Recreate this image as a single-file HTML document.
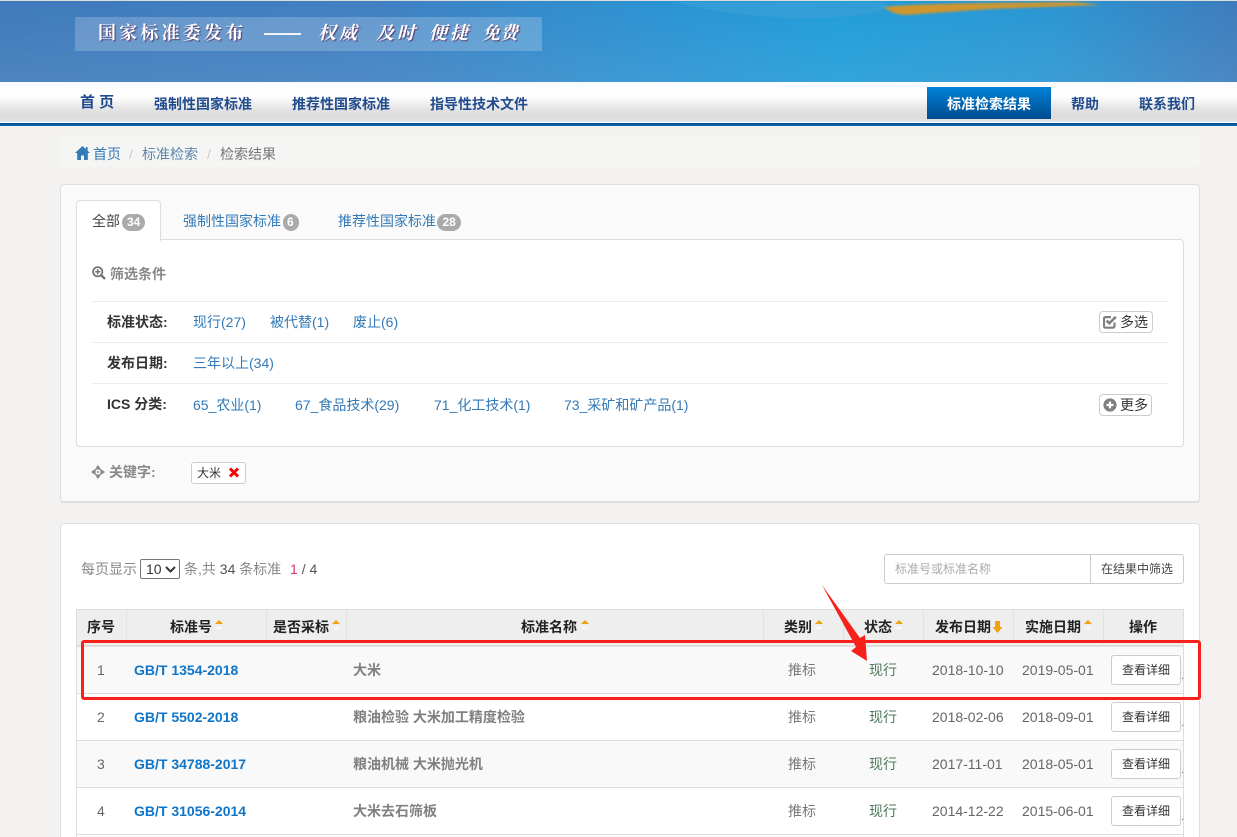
<!DOCTYPE html>
<html lang="zh-CN">
<head>
<meta charset="utf-8">
<title>检索结果</title>
<style>
html,body{margin:0;padding:0;width:1237px;height:837px;overflow:hidden;background:#f3f2f1}
body{position:relative;font-family:"Liberation Sans","Noto Sans CJK SC",sans-serif;font-size:14px;color:#666}
.a{position:absolute;box-sizing:border-box}
.t{position:absolute;white-space:nowrap;line-height:20px}
a{color:#337ab7;text-decoration:none}
.nav{font-weight:bold;color:#1f4b8e;margin-top:1px}
.lk{color:#337ab7}
.lb{font-weight:bold;color:#333}
.badge{display:inline-block;background:#aaa;color:#fff;font-size:12px;font-weight:bold;border-radius:9px;line-height:17px;padding:0 5px;text-align:center;vertical-align:0;margin-left:2px}
.hl{position:absolute;height:1px;background:#eee;left:92px;width:1076px}
.th{position:absolute;top:617px;white-space:nowrap;line-height:20px;font-weight:bold;color:#222;text-align:center}
.vl{position:absolute;top:610px;height:35px;width:1px;background:#e2e2e2}
.row{position:absolute;left:77px;width:1106px;height:46px;border-bottom:1px solid #ddd;box-sizing:content-box}
.btn{position:absolute;left:1111px;width:70px;height:30px;border:1px solid #ccc;border-radius:3px;background:#fff;box-sizing:border-box;text-align:center;line-height:28px;font-size:12px;color:#333}
.dot{position:absolute;left:1181px;font-size:11px;color:#777;line-height:12px}
.gb{font-weight:bold;color:#0e75c9}
.nm{font-weight:bold;color:#808080}
.bn{position:absolute;white-space:nowrap;top:21px;line-height:22px;font-size:18px;color:#fff;font-family:'Noto Serif CJK SC',serif;text-shadow:1px 1px 1px #5a3a6a}
.bi{font-weight:bold;font-style:italic;letter-spacing:3px}
</style>
</head>
<body>

<!-- banner -->
<div class="a" style="left:0;top:0;width:1237px;height:82px;background:linear-gradient(90deg,#3f7abb 0%,#4080c2 30%,#2a94d3 55%,#219dd8 68%,#2a96d2 85%,#3d7cbd 100%);border-top:1px solid #ddd"></div>
<div class="a" style="left:0;top:1px;width:1237px;height:81px;background:linear-gradient(180deg,rgba(255,255,255,0) 0%,rgba(255,255,255,.08) 100%)"></div>
<svg class="a" style="left:0;top:0" width="1237" height="82" viewBox="0 0 1237 82">
  <defs><filter id="b" x="-5%" y="-50%" width="110%" height="200%"><feGaussianBlur stdDeviation="1"/></filter></defs>
  <path d="M675 2C720 14 790 22 850 16C870 14 880 11 886 8L885 2Z" fill="#3a9fd6" opacity=".75"/>
  <path d="M884 7C920 3 1010 3 1075 2L1100 5L990 9L905 15C895 14 888 11 884 7Z" fill="#cf952f" filter="url(#b)"/>
</svg>
<div class="a" style="left:75px;top:17px;width:467px;height:34px;background:rgba(255,255,255,.2)"></div>
<div class="bn" style="left:98px;letter-spacing:3.2px;font-weight:bold">国家标准委发布</div>
<div class="a" style="left:264px;top:33px;width:37px;height:2px;background:#f2f4f8"></div>
<div class="bn bi" style="left:318px">权威</div>
<div class="bn bi" style="left:376px">及时</div>
<div class="bn bi" style="left:429px">便捷</div>
<div class="bn bi" style="left:482px;letter-spacing:0">免费</div>

<!-- nav -->
<div class="a" style="left:0;top:82px;width:1237px;height:40px;background:linear-gradient(180deg,#f8fafd 0%,#fff 25%,#fff 35%,#e2e2e2 70%,#dcdcdc 90%,#e8e8e8 100%)"></div>
<div class="a" style="left:0;top:122px;width:1237px;height:1px;background:#fff"></div>
<div class="a" style="left:0;top:123px;width:1237px;height:3px;background:linear-gradient(180deg,#004c8c,#0a69b4)"></div>
<div class="t nav" style="left:80px;top:92px;font-size:15px">首 页</div>
<div class="t nav" style="left:154px;top:93px">强制性国家标准</div>
<div class="t nav" style="left:292px;top:93px">推荐性国家标准</div>
<div class="t nav" style="left:430px;top:93px">指导性技术文件</div>
<div class="a" style="left:927px;top:87px;width:124px;height:32px;background:linear-gradient(180deg,#0082d8,#004c8f)"></div>
<div class="t nav" style="left:947px;top:93px;color:#fff">标准检索结果</div>
<div class="t nav" style="left:1071px;top:93px">帮助</div>
<div class="t nav" style="left:1139px;top:93px">联系我们</div>

<!-- breadcrumb -->
<div class="a" style="left:60px;top:135px;width:1140px;height:32px;background:#f5f5f4;border-radius:4px"></div>
<svg class="a" style="left:75px;top:146px" width="15" height="14" viewBox="0 0 15 14"><path d="M7.500 0L0 7H2.200V14H6V9.500H9V14H12.800V7H15L12.600 4.800V1H10.800V3.100Z" fill="#337ab7"/></svg>
<a class="t" style="left:93px;top:144px">首页</a>
<div class="t" style="left:129px;top:144px;color:#ccc">/</div>
<a class="t" style="left:142px;top:144px;color:#5a86ad">标准检索</a>
<div class="t" style="left:207px;top:144px;color:#ccc">/</div>
<div class="t" style="left:220px;top:144px;color:#777">检索结果</div>

<!-- panel 1 -->
<div class="a" style="left:60px;top:184px;width:1140px;height:319px;background:#fafafa;border:1px solid #e0e0e0;border-bottom:2px solid #ddd;border-radius:4px"></div>
<div class="a" style="left:76px;top:239px;width:1108px;height:208px;background:#fff;border:1px solid #ddd;border-radius:0 4px 4px 4px"></div>
<div class="a" style="left:76px;top:200px;width:85px;height:41px;background:#fff;border:1px solid #ddd;border-bottom:none;border-radius:4px 4px 0 0"></div>
<div class="t" style="left:92px;top:211px;color:#444">全部<span class="badge">34</span></div>
<a class="t" style="left:183px;top:211px">强制性国家标准<span class="badge" style="padding:0 5px 0 4px">6</span></a>
<a class="t" style="left:338px;top:211px">推荐性国家标准<span class="badge" style="margin-left:1px;padding:0 5.500px">28</span></a>

<svg class="a" style="left:92px;top:266px" width="14" height="14" viewBox="0 0 14 14"><circle cx="5.700" cy="5.700" r="4.600" fill="none" stroke="#777" stroke-width="1.800"/><path d="M9 9L13 13" stroke="#777" stroke-width="2.400"/><path d="M5.700 3.200V8.200M3.200 5.700H8.200" stroke="#777" stroke-width="1.600"/></svg>
<div class="t" style="left:110px;top:264px;font-weight:bold;color:#888">筛选条件</div>

<div class="hl" style="top:301px"></div>
<div class="hl" style="top:342px"></div>
<div class="hl" style="top:383px"></div>

<div class="t lb" style="left:107px;top:312px">标准状态:</div>
<a class="t lk" style="left:193px;top:312px">现行(27)</a>
<a class="t lk" style="left:270px;top:312px">被代替(1)</a>
<a class="t lk" style="left:353px;top:312px">废止(6)</a>

<div class="t lb" style="left:107px;top:353px">发布日期:</div>
<a class="t lk" style="left:193px;top:353px">三年以上(34)</a>

<div class="t lb" style="left:107px;top:394px">ICS 分类:</div>
<a class="t lk" style="left:193px;top:395px">65_农业(1)</a>
<a class="t lk" style="left:295px;top:395px">67_食品技术(29)</a>
<a class="t lk" style="left:434px;top:395px">71_化工技术(1)</a>
<a class="t lk" style="left:564px;top:395px">73_采矿和矿产品(1)</a>

<div class="a" style="left:1099px;top:311px;width:54px;height:22px;border:1px solid #ccc;border-radius:4px;background:#fff"></div>
<svg class="a" style="left:1103px;top:315px" width="14" height="14" viewBox="0 0 14 14"><path d="M11.500 7.500V11C11.500 12 10.800 12.700 9.800 12.700H2.700C1.700 12.700 1 12 1 11V3.800C1 2.800 1.700 2.100 2.700 2.100H8" fill="none" stroke="#808080" stroke-width="2.200"/><path d="M3.600 5.600L6.300 8.300L12.800 1.800" fill="none" stroke="#808080" stroke-width="2.600"/></svg>
<div class="t" style="left:1120px;top:312px;color:#333">多选</div>

<div class="a" style="left:1099px;top:394px;width:53px;height:22px;border:1px solid #ccc;border-radius:4px;background:#fff"></div>
<svg class="a" style="left:1103px;top:398px" width="14" height="14" viewBox="0 0 14 14"><circle cx="7" cy="7" r="6.600" fill="#808080"/><path d="M7 3.600V10.400M3.600 7H10.400" stroke="#fff" stroke-width="2.200"/></svg>
<div class="t" style="left:1120px;top:395px;color:#333">更多</div>

<svg class="a" style="left:91px;top:465px" width="14" height="14" viewBox="0 0 14 14"><circle cx="7" cy="7" r="3.400" fill="none" stroke="#888" stroke-width="1.600"/><path d="M7 0L9.200 3H4.800ZM7 14L9.200 11H4.800ZM0 7L3 4.800V9.200ZM14 7L11 4.800V9.200Z" fill="#888"/><circle cx="7" cy="7" r="1" fill="#888"/></svg>
<div class="t" style="left:109px;top:462px;font-weight:bold;color:#888">关键字:</div>
<div class="a" style="left:191px;top:462px;width:55px;height:22px;border:1px solid #ccc;border-radius:3px;background:#fff"></div>
<div class="t" style="left:197px;top:463px;font-size:12px;color:#333">大米</div>
<svg class="a" style="left:228px;top:467px" width="12" height="11" viewBox="0 0 12 11"><path d="M2 1.500L10 9.500M10 1.500L2 9.500" stroke="#f00000" stroke-width="3"/></svg>

<!-- panel 2 -->
<div class="a" style="left:60px;top:523px;width:1140px;height:330px;background:#fff;border:1px solid #e0e0e0;border-radius:4px"></div>
<div class="t" style="left:81px;top:559px;color:#888">每页显示</div>
<div class="a" style="left:140px;top:559px;width:40px;height:20px;border:1px solid #777;border-radius:2px;background:#fff"></div>
<div class="t" style="left:146px;top:559px;color:#333">10</div>
<svg class="a" style="left:165px;top:566px" width="11" height="7" viewBox="0 0 11 7"><path d="M1 1L5.500 5.500L10 1" fill="none" stroke="#333" stroke-width="2"/></svg>
<div class="t" style="left:184px;top:559px;color:#888">条,共 <span style="color:#555">34</span> 条标准</div>
<div class="t" style="left:290px;top:559px"><span style="color:#e0306a">1</span> <span style="color:#555">/ 4</span></div>

<div class="a" style="left:884px;top:554px;width:300px;height:30px;border:1px solid #ccc;border-radius:3px;background:#fff"></div>
<div class="a" style="left:1090px;top:554px;width:1px;height:30px;background:#ccc"></div>
<div class="t" style="left:895px;top:559px;font-size:12px;color:#aaa">标准号或标准名称</div>
<div class="t" style="left:1101px;top:559px;font-size:12px;color:#444">在结果中筛选</div>

<!-- table -->
<div class="a" style="left:76px;top:609px;width:1108px;height:228px;border:1px solid #ddd;border-bottom:none"></div>
<div class="a" style="left:77px;top:610px;width:1106px;height:35px;background:#eee"></div>
<div class="a" style="left:77px;top:645px;width:1106px;height:2px;background:#ddd"></div>
<div class="vl" style="left:126px"></div>
<div class="vl" style="left:266px"></div>
<div class="vl" style="left:346px"></div>
<div class="vl" style="left:763px"></div>
<div class="vl" style="left:843px"></div>
<div class="vl" style="left:923px"></div>
<div class="vl" style="left:1013px"></div>
<div class="vl" style="left:1103px"></div>

<div class="th" style="left:87px">序号</div>
<div class="th" style="left:170px">标准号</div>
<div class="th" style="left:273px">是否采标</div>
<div class="th" style="left:521px">标准名称</div>
<div class="th" style="left:784px">类别</div>
<div class="th" style="left:864px">状态</div>
<div class="th" style="left:935px">发布日期</div>
<div class="th" style="left:1025px">实施日期</div>
<div class="th" style="left:1129px">操作</div>

<svg class="a" style="left:0;top:0;pointer-events:none" width="1237" height="837" viewBox="0 0 1237 837">
  <g fill="#f0a010">
    <path d="M215 624L219 620L223 624Z"/><path d="M332 624L336 620L340 624Z"/><path d="M581 624L585 620L589 624Z"/><path d="M815 624L819 620L823 624Z"/><path d="M895 624L899 620L903 624Z"/><path d="M1084 624L1088 620L1092 624Z"/>
    <path d="M995 621H1000V627H1002.500L997.500 633L992.500 627H995Z"/>
  </g>
  <g fill="#f8f8f8">
    <path d="M215 627L219 631L223 627Z"/><path d="M332 627L336 631L340 627Z"/><path d="M581 627L585 631L589 627Z"/><path d="M815 627L819 631L823 627Z"/><path d="M895 627L899 631L903 627Z"/><path d="M1084 627L1088 631L1092 627Z"/>
  </g>
</svg>

<!-- rows -->
<div class="row" style="top:647px;background:#f9f9f9"></div>
<div class="row" style="top:694px;background:#fff"></div>
<div class="row" style="top:741px;background:#f9f9f9"></div>
<div class="row" style="top:788px;background:#fff"></div>

<div class="t" style="left:97px;top:660px">1</div>
<div class="t gb" style="left:134px;top:660px">GB/T 1354-2018</div>
<div class="t nm" style="left:353px;top:660px">大米</div>
<div class="t" style="left:788px;top:660px;color:#777">推标</div>
<div class="t" style="left:869px;top:660px;color:#4f7a5c">现行</div>
<div class="t" style="left:932px;top:660px">2018-10-10</div>
<div class="t" style="left:1022px;top:660px">2019-05-01</div>
<div class="btn" style="top:655px">查看详细</div>
<div class="dot" style="top:670px">.</div>

<div class="t" style="left:97px;top:707px">2</div>
<div class="t gb" style="left:134px;top:707px">GB/T 5502-2018</div>
<div class="t nm" style="left:353px;top:707px">粮油检验 大米加工精度检验</div>
<div class="t" style="left:788px;top:707px;color:#777">推标</div>
<div class="t" style="left:869px;top:707px;color:#4f7a5c">现行</div>
<div class="t" style="left:932px;top:707px">2018-02-06</div>
<div class="t" style="left:1022px;top:707px">2018-09-01</div>
<div class="btn" style="top:702px">查看详细</div>
<div class="dot" style="top:717px">.</div>

<div class="t" style="left:97px;top:754px">3</div>
<div class="t gb" style="left:134px;top:754px">GB/T 34788-2017</div>
<div class="t nm" style="left:353px;top:754px">粮油机械 大米抛光机</div>
<div class="t" style="left:788px;top:754px;color:#777">推标</div>
<div class="t" style="left:869px;top:754px;color:#4f7a5c">现行</div>
<div class="t" style="left:932px;top:754px">2017-11-01</div>
<div class="t" style="left:1022px;top:754px">2018-05-01</div>
<div class="btn" style="top:749px">查看详细</div>
<div class="dot" style="top:764px">.</div>

<div class="t" style="left:97px;top:801px">4</div>
<div class="t gb" style="left:134px;top:801px">GB/T 31056-2014</div>
<div class="t nm" style="left:353px;top:801px">大米去石筛板</div>
<div class="t" style="left:788px;top:801px;color:#777">推标</div>
<div class="t" style="left:869px;top:801px;color:#4f7a5c">现行</div>
<div class="t" style="left:932px;top:801px">2014-12-22</div>
<div class="t" style="left:1022px;top:801px">2015-06-01</div>
<div class="btn" style="top:796px">查看详细</div>
<div class="dot" style="top:811px">.</div>

<!-- red annotation -->
<div class="a" style="left:81px;top:640px;width:1120px;height:60px;border:3px solid #f8211a;border-radius:3px"></div>
<svg class="a" style="left:0;top:0" width="1237" height="837" viewBox="0 0 1237 837">
  <path d="M822 585L860 638L865 635L867 661L851 651L856 647Z" fill="#f8211a"/>
</svg>

</body>
</html>
